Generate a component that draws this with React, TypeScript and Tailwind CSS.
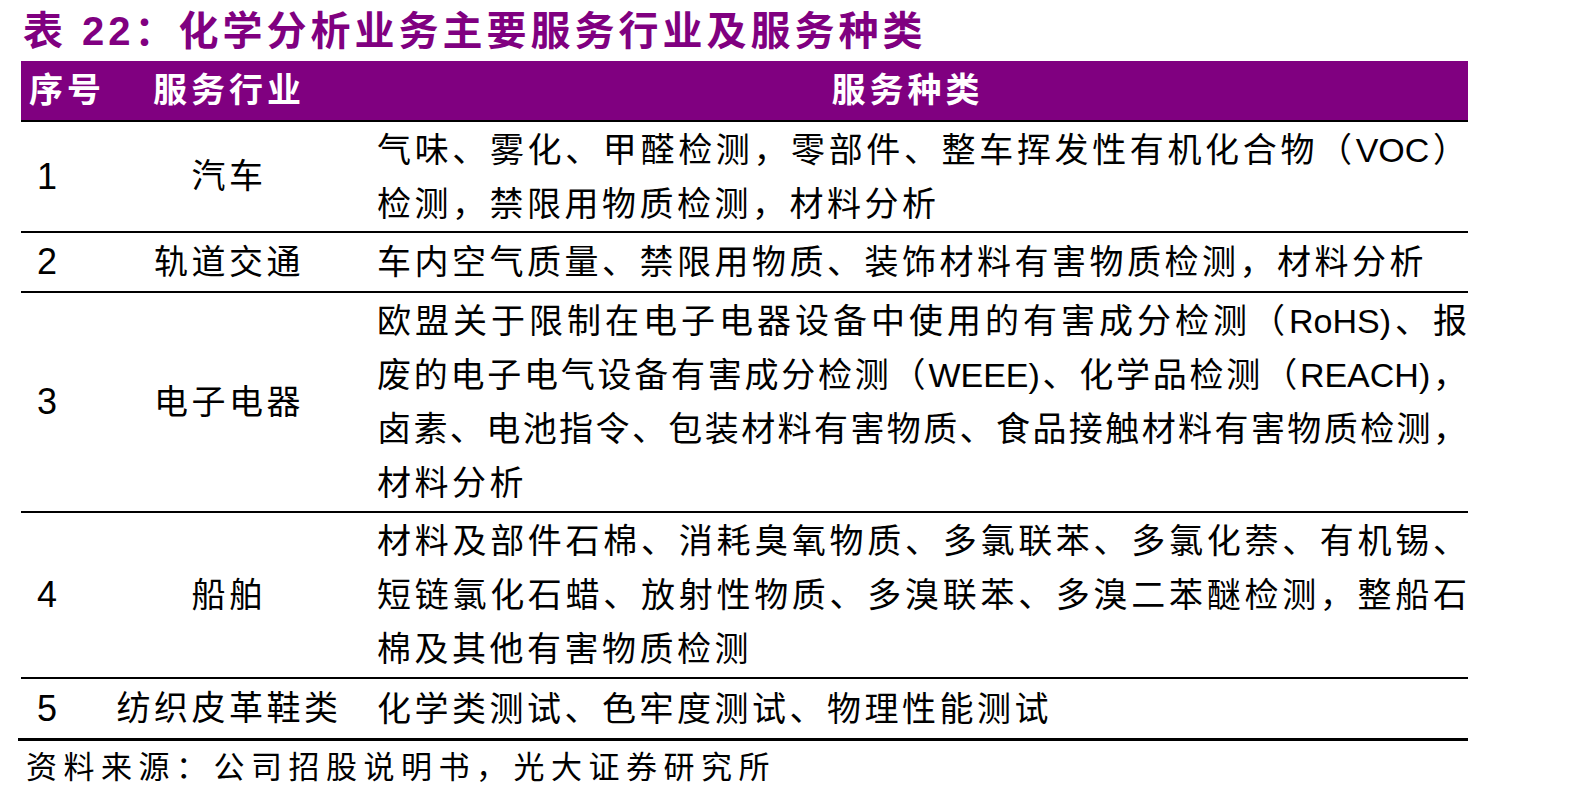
// 表 22：化学分析业务主要服务行业及服务种类
import React from 'react';

const FONT = { fontFamily: '"Liberation Sans", "Noto Sans CJK SC", sans-serif' };

type Line = { text: string; full?: boolean; track?: string };

interface Row {
  no: string;
  industry: string;
  height: string;
  lines: Line[];
}

const ROWS: Row[] = [
  {
    no: '1',
    industry: '汽车',
    height: 'h-[111px]',
    lines: [
      { text: '气味、雾化、甲醛检测，零部件、整车挥发性有机化合物（VOC）', full: true },
      { text: '检测，禁限用物质检测，材料分析' },
    ],
  },
  {
    no: '2',
    industry: '轨道交通',
    height: 'h-[60px]',
    lines: [{ text: '车内空气质量、禁限用物质、装饰材料有害物质检测，材料分析' }],
  },
  {
    no: '3',
    industry: '电子电器',
    height: 'h-[220px]',
    lines: [
      { text: '欧盟关于限制在电子电器设备中使用的有害成分检测（RoHS)、报', full: true },
      { text: '废的电子电气设备有害成分检测（WEEE)、化学品检测（REACH)，', full: true },
      { text: '卤素、电池指令、包装材料有害物质、食品接触材料有害物质检测，', full: true },
      { text: '材料分析' },
    ],
  },
  {
    no: '4',
    industry: '船舶',
    height: 'h-[166px]',
    lines: [
      { text: '材料及部件石棉、消耗臭氧物质、多氯联苯、多氯化萘、有机锡、', full: true },
      { text: '短链氯化石蜡、放射性物质、多溴联苯、多溴二苯醚检测，整船石', full: true },
      { text: '棉及其他有害物质检测' },
    ],
  },
];

function Services({ lines }: { lines: Line[] }) {
  return (
    <div className="flex flex-col w-full">
      {lines.map((l, i) => (
        <div
          key={i}
          className={
            l.full
              ? 'h-[54px] leading-[54px] whitespace-nowrap text-justify [text-align-last:justify]'
              : `h-[54px] leading-[54px] whitespace-nowrap ${l.track ?? 'tracking-[3.5px]'}`
          }
        >
          {l.text}
        </div>
      ))}
    </div>
  );
}

function TableRow({ row, last }: { row: Row; last?: boolean }) {
  return (
    <div
      className={`grid grid-cols-[90px_236px_1fr] ${row.height} ${last ? '' : 'border-b-2 border-black'}`}
    >
      <div className="flex items-center pl-[16px] text-[36px]">{row.no}</div>
      <div className="flex items-center justify-center text-[34px] tracking-[3.5px]">
        {row.industry}
      </div>
      <div className="flex items-center pl-[30px] pr-[1px] text-[34px]">
        <Services lines={row.lines} />
      </div>
    </div>
  );
}

export default function App() {
  const fifth: Row = {
    no: '5',
    industry: '纺织皮革鞋类',
    height: 'h-[59px]',
    lines: [{ text: '化学类测试、色牢度测试、物理性能测试' }],
  };

  return (
    <div className="w-[1594px] h-[801px] bg-white text-black overflow-hidden" style={FONT}>
      <div className="ml-[21px] w-[1447px]">
        <div className="h-[61px] flex items-center pl-[2px] text-[40px] font-bold text-[#800080] tracking-[4px]">
          表 22：化学分析业务主要服务行业及服务种类
        </div>

        <div className="grid grid-cols-[90px_236px_1fr] h-[61px] bg-[#800080] border-b-2 border-black text-white text-[34px] font-bold tracking-[4px]">
          <div className="flex items-center pl-[8px]">序号</div>
          <div className="flex items-center justify-center">服务行业</div>
          <div className="flex items-center justify-center">服务种类</div>
        </div>

        {ROWS.map((r) => (
          <TableRow key={r.no} row={r} />
        ))}
        <TableRow row={fifth} last />
        <div className="h-[3px] bg-black -ml-[3px]" />

        <div className="h-[55px] flex items-center pl-[5px] text-[31px] tracking-[6.5px]">
          资料来源：公司招股说明书，光大证券研究所
        </div>
      </div>
    </div>
  );
}
